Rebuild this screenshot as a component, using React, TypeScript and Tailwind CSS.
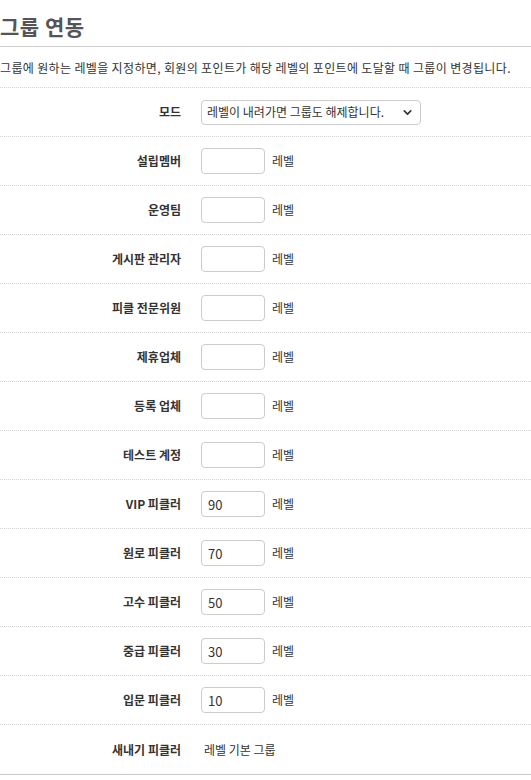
import { ChevronDown } from "lucide-react";

const rows: { label: string; value?: string }[] = [
  { label: "설립멤버" },
  { label: "운영팀" },
  { label: "게시판 관리자" },
  { label: "피클 전문위원" },
  { label: "제휴업체" },
  { label: "등록 업체" },
  { label: "테스트 계정" },
  { label: "VIP 피클러", value: "90" },
  { label: "원로 피클러", value: "70" },
  { label: "고수 피클러", value: "50" },
  { label: "중급 피클러", value: "30" },
  { label: "입문 피클러", value: "10" },
];

function Row({ label, children }: { label: string; children: React.ReactNode }) {
  return (
    <div className="flex h-[49px] items-center border-b border-dotted border-[#d4d4d4]">
      <div className="w-[181px] shrink-0 text-right text-[12px] font-bold text-[#333]">{label}</div>
      <div className="flex items-center pl-[20px]">{children}</div>
    </div>
  );
}

export default function App() {
  return (
    <div className="w-[531px] bg-white text-[#333]" style={{ fontFamily: '"Noto Sans CJK KR", "Noto Sans", sans-serif' }}>
      <h2 className="h-[47px] border-b border-[#d0d0d0] pt-[12px] text-[21px] leading-[28px] font-bold tracking-[0.5px] text-[#555]">그룹 연동</h2>
      <p className="h-[41px] border-b border-dotted border-[#d4d4d4] pt-[12px] text-[12px] leading-[18px] tracking-[0.35px]">
        그룹에 원하는 레벨을 지정하면, 회원의 포인트가 해당 레벨의 포인트에 도달할 때 그룹이 변경됩니다.
      </p>
      <Row label="모드">
        <div className="flex h-[25px] w-[220px] items-center justify-between rounded-[4px] border border-[#ccc] pr-[6px] pl-[5px] text-[12px]">
          <span>레벨이 내려가면 그룹도 해제합니다.</span>
          <ChevronDown className="h-[13px] w-[13px] text-[#333]" strokeWidth={3} />
        </div>
      </Row>
      {rows.map((r) => (
        <Row key={r.label} label={r.label}>
          <input
            defaultValue={r.value}
            className="h-[26px] w-[64px] rounded-[4px] border border-[#ccc] px-[6px] text-[13px] text-[#333] outline-none"
          />
          <span className="ml-[7px] text-[12px]">레벨</span>
        </Row>
      ))}
      <div className="flex h-[50px] items-center border-b border-[#c8c8c8]">
        <div className="w-[181px] shrink-0 text-right text-[12px] font-bold">새내기 피클러</div>
        <div className="pl-[23px] text-[12px]">레벨 기본 그룹</div>
      </div>
    </div>
  );
}
